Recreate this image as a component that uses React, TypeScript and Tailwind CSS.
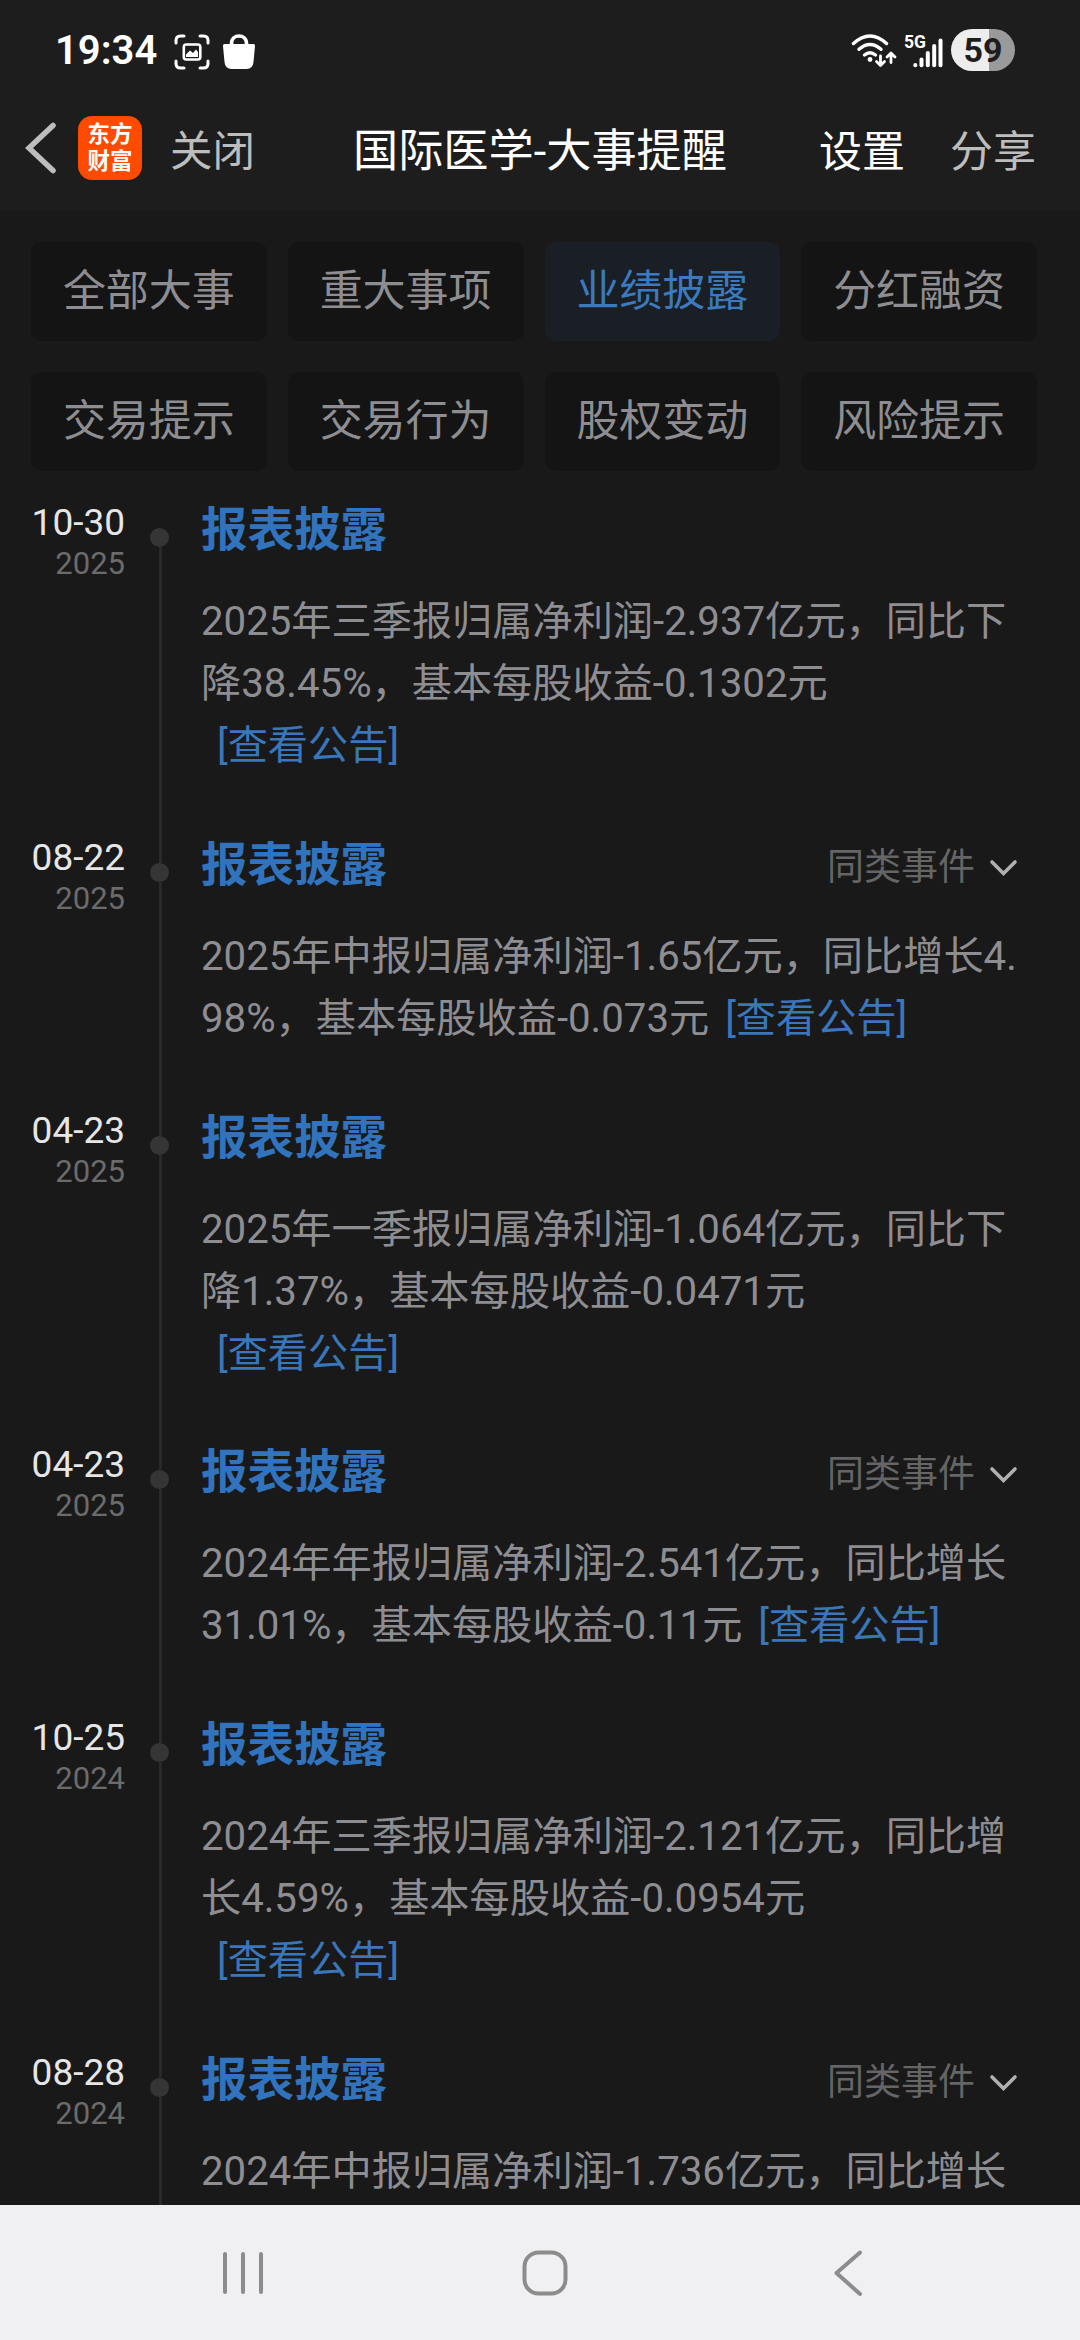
import clsx from "clsx";

interface Disclosure {
  date: string;
  year: string;
  lines: string[];
  // the notice link sits on its own row when the last line is too long
  linkOnNewLine?: boolean;
  hasSimilar?: boolean;
}

const TABS = [
  "全部大事",
  "重大事项",
  "业绩披露",
  "分红融资",
  "交易提示",
  "交易行为",
  "股权变动",
  "风险提示",
];

const ACTIVE_TAB = "业绩披露";

const DISCLOSURES: Disclosure[] = [
  {
    date: "10-30",
    year: "2025",
    lines: ["2025年三季报归属净利润-2.937亿元，同比下", "降38.45%，基本每股收益-0.1302元"],
    linkOnNewLine: true,
  },
  {
    date: "08-22",
    year: "2025",
    lines: ["2025年中报归属净利润-1.65亿元，同比增长4.", "98%，基本每股收益-0.073元"],
    hasSimilar: true,
  },
  {
    date: "04-23",
    year: "2025",
    lines: ["2025年一季报归属净利润-1.064亿元，同比下", "降1.37%，基本每股收益-0.0471元"],
    linkOnNewLine: true,
  },
  {
    date: "04-23",
    year: "2025",
    lines: ["2024年年报归属净利润-2.541亿元，同比增长", "31.01%，基本每股收益-0.11元"],
    hasSimilar: true,
  },
  {
    date: "10-25",
    year: "2024",
    lines: ["2024年三季报归属净利润-2.121亿元，同比增", "长4.59%，基本每股收益-0.0954元"],
    linkOnNewLine: true,
  },
  {
    date: "08-28",
    year: "2024",
    lines: ["2024年中报归属净利润-1.736亿元，同比增长"],
    hasSimilar: true,
  },
];

function StatusBar() {
  return (
    <div className="flex h-[100px] items-center justify-between pl-[55px] pr-[65px] text-white">
      <div className="flex items-center">
        <span className="w-[119px] pt-[2px] text-[40px] leading-none font-semibold">19:34</span>
        <svg width="36" height="36" viewBox="0 0 36 36" fill="none" className="mt-[3px]">
          <g stroke="#fff" strokeWidth="3" strokeLinecap="round">
            <path d="M2 9V6.500Q2 2 6.500 2H10" />
            <path d="M26 2H29.500Q34 2 34 6.500V9" />
            <path d="M34 27V29.500Q34 34 29.500 34H26" />
            <path d="M10 34H6.500Q2 34 2 29.500V27" />
          </g>
          <rect x="9.800" y="10.500" width="16.500" height="15" rx="2.500" stroke="#fff" strokeWidth="2.600" />
          <path d="M12 23V20.500L16 16.500L19 19L22 15.500L24 18V23Z" fill="#fff" />
        </svg>
        <svg width="34" height="36" viewBox="0 0 34 36" fill="none" className="mt-[3px] ml-[12px]">
          <path d="M9.500 12V9.500C9.500 -0.500 24.500 -0.500 24.500 9.500V12" stroke="#fff" strokeWidth="3.600" />
          <path d="M2.500 10H31.500Q33.300 10 33 12L31.500 28Q30.800 35 24.500 35H9.500Q3.200 35 2.500 28L1 12Q0.700 10 2.500 10Z" fill="#fff" />
        </svg>
      </div>
      <div className="flex items-center">
        <svg width="98" height="44" viewBox="0 0 98 44" fill="none">
          <g stroke="#fff" strokeWidth="3.400" strokeLinecap="round">
            <path d="M3.500 15.500Q20 0.500 36.500 15.500" />
            <path d="M9 21.300Q20 11.500 31 21.300" />
            <path d="M14.500 27Q20 22.500 25.500 27" />
          </g>
          <circle cx="20" cy="31.500" r="2.400" fill="#fff" />
          <g stroke="#fff" strokeWidth="2.800" strokeLinecap="round" strokeLinejoin="round">
            <path d="M30.500 28V36.500M26.500 33.500L30.500 37.500L34.500 33.500" />
            <path d="M41 34.500V26M37 29L41 25L45 29" />
          </g>
          <text x="54" y="19.500" fill="#fff" fontSize="17.500" fontWeight="700">
            5G
          </text>
          <g stroke="#fff" strokeWidth="4" strokeLinecap="round">
            <path d="M65.300 37V37.200" />
            <path d="M71.500 31.500V37.200" />
            <path d="M77.800 25V37.200" />
            <path d="M84.200 18V37.200" />
            <path d="M90.500 12.500V37.200" />
          </g>
        </svg>
        <div className="ml-[3px] flex h-[42px] w-16 items-center justify-center rounded-full bg-[linear-gradient(90deg,#ededed_59%,#9a9a9a_59%)] text-[34px] leading-none font-bold text-[#1d1d1d]">
          59
        </div>
      </div>
    </div>
  );
}

function TitleBar() {
  return (
    <div className="flex h-[95px] items-center text-[43px] leading-[60px]">
      <div className="flex w-[353px] items-center">
        <svg width="32" height="52" viewBox="0 0 32 52" fill="none" className="ml-[25px]">
          <path d="M28 3.500L4 26L28 48.500" stroke="#bdbdbd" strokeWidth="5.500" strokeLinecap="round" />
        </svg>
        <div className="ml-[21px] flex h-16 w-16 flex-col items-center justify-center rounded-[14px] bg-[#ff4b00] text-[22.5px] leading-[27px] font-bold text-white">
          <span>东方</span>
          <span>财富</span>
        </div>
        <span className="ml-7 pt-2 text-[42.5px] text-[#bdbdbd]">关闭</span>
      </div>
      <h1 className="pt-[9px] text-[45.2px] whitespace-nowrap text-white">国际医学-大事提醒</h1>
      <div className="ml-auto flex gap-[45px] pt-2 pr-[44px]">
        <span className="text-white">设置</span>
        <span className="text-[#bdbdbd]">分享</span>
      </div>
    </div>
  );
}

function TabGrid() {
  return (
    <div className="grid w-[1006px] grid-cols-4 gap-x-[21px] gap-y-[31px] pt-[31px]">
      {TABS.map((tab) => (
        <div
          key={tab}
          className={clsx(
            "flex h-[99px] items-center justify-center rounded-[11px] pb-[2px] text-[43px] leading-[60px]",
            tab === ACTIVE_TAB ? "bg-[#1a1f26] text-[#3c7abf]" : "bg-[#141414] text-[#8e8e92]"
          )}
        >
          {tab}
        </div>
      ))}
    </div>
  );
}

function NoticeLink() {
  return <a className="ml-4 text-[#3a76ba]">[查看公告]</a>;
}

function TimelineItem({ item, first }: { item: Disclosure; first: boolean }) {
  return (
    <div className="flex shrink-0">
      <div className="flex w-[125px] flex-col items-end pt-[2px]">
        <span className="text-[37px] leading-[42px] text-[#e6e6e6]">{item.date}</span>
        <span className="text-[31px] leading-[40px] text-[#6b6b6b]">{item.year}</span>
      </div>

      <div className="ml-[25px] flex w-[19px] flex-col items-center">
        <div className={clsx("ml-px h-[28px] w-[3px] shrink-0", !first && "bg-[#29292a]")} />
        <div className="h-[19px] w-[19px] shrink-0 rounded-full bg-[#353535]" />
        <div className="ml-px w-[3px] grow bg-[#29292a]" />
      </div>

      <div className="ml-8 w-[817px] pb-[57.8px]">
        <div className="flex h-[60px] items-center justify-between">
          <h2 className="text-[46.5px] leading-[60px] font-bold text-[#3273be]">报表披露</h2>
          {item.hasSimilar && (
            <div className="flex items-center pt-[6px] text-[37px] leading-[56px] text-[#656565]">
              同类事件
              <svg width="29" height="18" viewBox="0 0 29 18" fill="none" className="ml-[14px]">
                <path d="M3 3L14.500 14.500L26 3" stroke="#b0b0b0" strokeWidth="3.600" strokeLinecap="round" />
              </svg>
            </div>
          )}
        </div>
        <div className="mt-[31px] text-[40.2px] leading-[62px] whitespace-nowrap text-[#8e8e92]">
          {item.lines.map((line, i) => (
            <p key={line}>
              {line}
              {i === 1 && !item.linkOnNewLine && <NoticeLink />}
            </p>
          ))}
          {item.linkOnNewLine && (
            <p>
              <NoticeLink />
            </p>
          )}
        </div>
      </div>
    </div>
  );
}

function SystemNav() {
  return (
    <div className="flex h-[135px] shrink-0 items-center bg-[#f0f0f2] pl-[221px]">
      <svg width="44" height="48" viewBox="0 0 44 48" fill="none" stroke="#8c8c8c" strokeWidth="4" strokeLinecap="round">
        <path d="M4 5V43M22 5V43M40 5V43" />
      </svg>
      <svg width="48" height="48" viewBox="0 0 48 48" fill="none" className="ml-[256px]">
        <rect x="3.500" y="3.500" width="41" height="41" rx="14" stroke="#8c8c8c" strokeWidth="4" />
      </svg>
      <svg width="32" height="48" viewBox="0 0 32 48" fill="none" className="ml-[263px]">
        <path d="M28 3.500L4.500 24L28 45" stroke="#8c8c8c" strokeWidth="4" strokeLinecap="round" strokeLinejoin="round" />
      </svg>
    </div>
  );
}

export default function App() {
  return (
    <div className="flex h-[2340px] w-[1080px] flex-col overflow-hidden bg-[#19191a] font-[Roboto,'Noto_Sans_CJK_SC',sans-serif]">
      <header className="h-[211px] shrink-0 bg-[#1d1d1d]">
        <StatusBar />
        <TitleBar />
      </header>

      <main className="flex min-h-0 grow flex-col overflow-hidden">
        <div className="shrink-0 pl-[31px]">
          <TabGrid />
        </div>
        <div className="flex flex-col pt-[29px]">
          {DISCLOSURES.map((item, i) => (
            <TimelineItem key={i} item={item} first={i === 0} />
          ))}
        </div>
      </main>

      <SystemNav />
    </div>
  );
}
